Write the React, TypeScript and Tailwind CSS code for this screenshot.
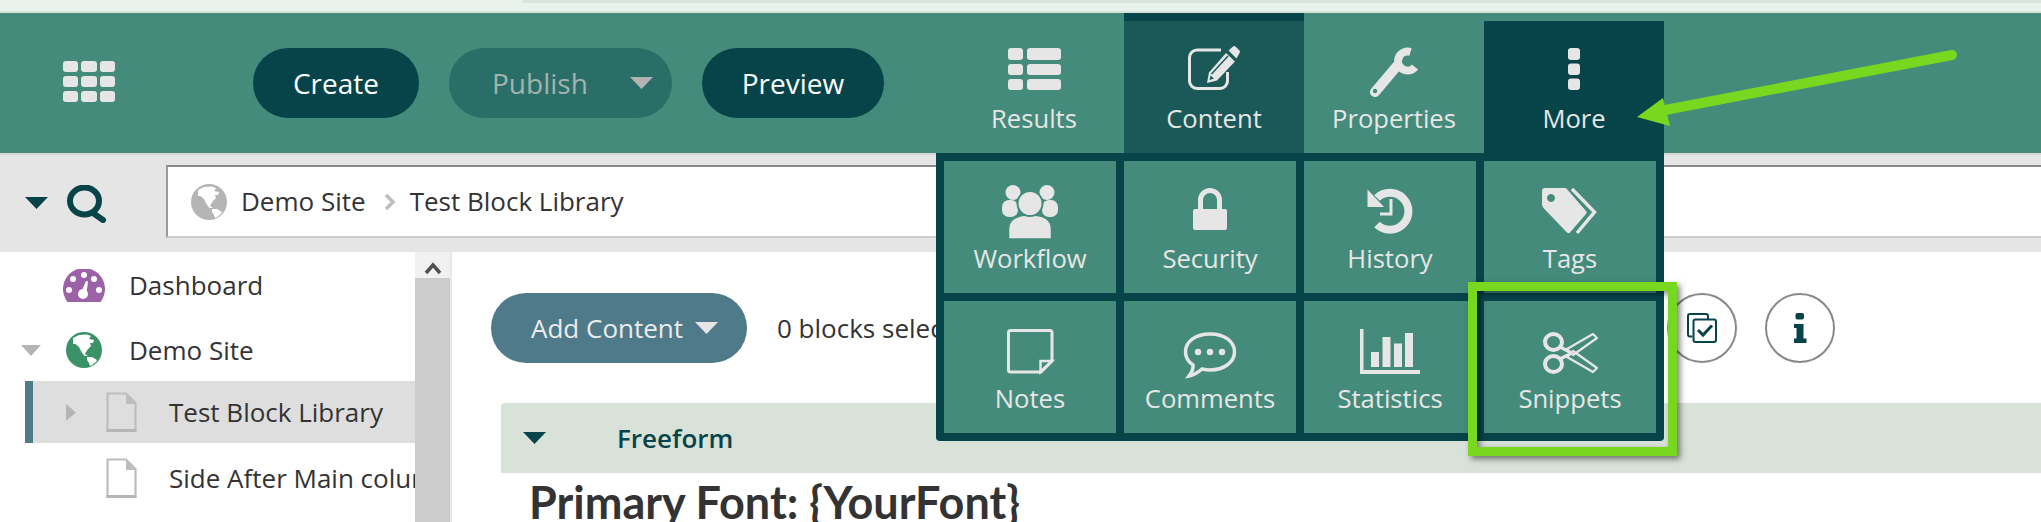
import React from "react";

const C = "#e6e6e6";
const TEAL = "#448b7b";
const DARK = "#07444a";

const Box = ({ children }: { children: React.ReactNode }) => (
  <svg width="60" height="56" viewBox="0 0 60 56" className="shrink-0 block">{children}</svg>
);

const IconResults = () => (
  <Box>
    {[5, 21, 36].map((y, i) => (
      <g key={y} fill={C}>
        <rect x="4" y={y} width="15" height={i === 0 ? 12 : 11} rx="3" />
        <rect x="23" y={y} width="34" height={i === 0 ? 12 : 11} rx="3" />
      </g>
    ))}
  </Box>
);

const IconContent = () => (
  <Box>
    <path d="M37 7 H13 a7.5 7.5 0 0 0 -7.5 7.5 V38 a7.5 7.5 0 0 0 7.5 7.5 H36 a7.5 7.5 0 0 0 7.5 -7.5 V29" fill="none" stroke={C} strokeWidth="3" />
    <path d="M23 40 L25 29.5 L42 10 L51 18.5 L33 37.5 Z" fill={C} />
    <path d="M44.5 7.5 L49 3.5 a2 2 0 0 1 2.5 0 L55.5 7.5 a2 2 0 0 1 0 2.5 L52.5 15.5 Z" fill={C} />
    <path d="M27.5 31 L44 13" stroke="#1b5858" strokeWidth="1.4" fill="none" />
    <path d="M25.5 37 L26.5 32.5 L30 35.5 Z" fill="#1b5858" />
  </Box>
);

const IconWrench = () => (
  <Box>
    <path d="M46.5 9 A9.5 9.5 0 1 0 51 24" fill="none" stroke={C} strokeWidth="8" />
    <path d="M11 49 L33 23" stroke={C} strokeWidth="10" strokeLinecap="round" />
    <circle cx="11" cy="48" r="2.2" fill={TEAL} />
  </Box>
);

const IconDots = () => (
  <Box>
    <rect x="24" y="5" width="12" height="12" rx="3" fill={C} />
    <rect x="24" y="20.5" width="12" height="11.5" rx="3" fill={C} />
    <rect x="24" y="35.5" width="12" height="11.5" rx="3" fill={C} />
  </Box>
);

const IconWorkflow = () => (
  <Box>
    <circle cx="13" cy="7.5" r="7.5" fill={C} />
    <circle cx="47" cy="7.5" r="7.5" fill={C} />
    <rect x="2" y="15" width="16" height="17" rx="7" fill={C} />
    <rect x="42" y="15" width="16" height="17" rx="7" fill={C} />
    <path d="M8.5 54 V44 C8.5 34 16 30 30 30 C44 30 51.5 34 51.5 44 V54 Z" fill={C} stroke={TEAL} strokeWidth="1.5" />
    <circle cx="30" cy="18.5" r="12.5" fill={C} stroke={TEAL} strokeWidth="2" />
  </Box>
);

const IconLock = () => (
  <Box>
    <path d="M20.5 26 V15 a9.5 9.5 0 0 1 19 0 V26" fill="none" stroke={C} strokeWidth="5" />
    <rect x="13" y="24" width="34" height="21" rx="2" fill={C} />
  </Box>
);

const IconHistory = () => (
  <Box>
    <path d="M17 13 A18.5 18.5 0 1 1 17 39.5" fill="none" stroke={C} strokeWidth="8" />
    <path d="M7.5 4.5 V22 H24 Z" fill={C} />
    <path d="M31 14 V29 H20" fill="none" stroke={C} strokeWidth="3" />
  </Box>
);

const IconTags = () => (
  <Box>
    <path fillRule="evenodd" d="M5 3 H26 L46 26 Q47.5 27.5 46 29 L30 47.5 Q28 49 26.5 47 L3.5 23 Q2 21.5 2 19 V6 Q2 3 5 3 Z M11 9 a4 4 0 1 0 0.01 0 Z" fill={C} />
    <path d="M32 4 L54.5 27 L37 48" fill="none" stroke={C} strokeWidth="3.5" />
  </Box>
);

const IconNotes = () => (
  <Box>
    <path d="M10.5 5.5 H50 Q52 5.5 52 7.5 V36 L41 47 H10.5 Q8.5 47 8.5 45 V7.5 Q8.5 5.5 10.5 5.5 Z" fill="none" stroke={C} strokeWidth="3" />
    <path d="M52 36 H40.5 V47 Z" fill="none" stroke={C} strokeWidth="2.5" />
  </Box>
);

const IconComments = () => (
  <Box>
    <path d="M13 40 C7 36 5.5 31 5.5 27 C5.5 16 16 9 30 9 C44 9 54.5 16 54.5 27 C54.5 37 44 45 30 45 C27 45 24.5 44.5 22 44 C18 47.5 14 50 9 51 C12 47 13.5 44 13 40 Z" fill="none" stroke={C} strokeWidth="3.5" />
    <circle cx="18" cy="27" r="3.2" fill={C} />
    <circle cx="30" cy="27" r="3.2" fill={C} />
    <circle cx="42" cy="27" r="3.2" fill={C} />
  </Box>
);

const IconStats = () => (
  <Box>
    <rect x="0" y="4" width="3.5" height="45" fill={C} />
    <rect x="0" y="45" width="60" height="4" fill={C} />
    <rect x="11" y="27" width="8" height="15" fill={C} />
    <rect x="22.5" y="12" width="8" height="30" fill={C} />
    <rect x="34" y="18.5" width="8" height="23.5" fill={C} />
    <rect x="45" y="8" width="8" height="34" fill={C} />
  </Box>
);

const IconScissors = () => (
  <Box>
    <ellipse cx="13.5" cy="17" rx="8.5" ry="8" fill="none" stroke={C} strokeWidth="4" />
    <ellipse cx="13.5" cy="39" rx="8.5" ry="8" fill="none" stroke={C} strokeWidth="4" />
    <path d="M20 22 L30 27 M20 34 L30 29" stroke={C} strokeWidth="3.5" />
    <path d="M27 24 L53 9 L57 13 L33 30 Z" fill="none" stroke={C} strokeWidth="2.2" strokeLinejoin="round" />
    <path d="M27 32 L53 47 L57 43 L33 26 Z" fill="none" stroke={C} strokeWidth="2.2" strokeLinejoin="round" />
    <circle cx="30" cy="28" r="1.6" fill={C} />
  </Box>
);

const Continents = ({ fill }: { fill: string }) => (
  <g fill={fill}>
    <path d="M7 6 L13 3 L21 2.5 L25 4 L23 7 L28 8 L27 11 L24 11 L25 14 L22 17 L20 20 L19 22 L22 24 L18.5 24 L15.5 20 L13 15 L9.5 12 L7 12 Z" />
    <path d="M21 25 L26 25 L31 28 L30 30 L26 33 L24 34 L23 31 L21 28 Z" />
  </g>
);

const Globe = ({ bg, className }: { bg: string; className?: string }) => (
  <svg width="36" height="36" viewBox="0 0 36 36" className={className}>
    <circle cx="18" cy="18" r="18" fill={bg} />
    <Continents fill="#ffffff" />
  </svg>
);

const Gauge = () => (
  <svg width="42" height="33" viewBox="0 0 42 33" className="shrink-0">
    <path d="M4.5 33 A21 21 0 1 1 37.5 33 Z" fill="#9b62a8" />
    {[[6, 21], [10, 10], [21, 6], [31, 10], [36, 21]].map(([x, y]) => (
      <circle key={x} cx={x} cy={y} r="3" fill="#fff" />
    ))}
    <path d="M23 12 L25 12.5 L23.5 24 L18 24 Z" fill="#fff" />
    <circle cx="20" cy="25" r="5" fill="#fff" />
  </svg>
);

const Doc = () => (
  <svg width="31" height="40" viewBox="0 0 31 40" className="shrink-0">
    <path d="M1.5 1.5 H20 L29.5 11 V38.5 H1.5 Z" fill="#fff" fillOpacity="0" stroke="#bdbdbd" strokeWidth="2.2" />
    <path d="M20 1 V12 H30 Z" fill="#bdbdbd" />
    <rect x="0.5" y="37" width="30" height="3" fill="#b5b5b5" />
  </svg>
);

const Caret = ({ w, h, color, dir = "down", className }: { w: number; h: number; color: string; dir?: "down" | "right"; className?: string }) => (
  <svg width={w} height={h} viewBox={`0 0 ${w} ${h}`} className={className}>
    <polygon points={dir === "down" ? `0,0 ${w},0 ${w / 2},${h}` : `0,0 ${w},${h / 2} 0,${h}`} fill={color} />
  </svg>
);

const Tab = ({ label, icon, variant }: { label: string; icon: React.ReactNode; variant?: "active" | "more" }) => {
  const cls =
    variant === "active"
      ? "bg-[#1b5858] border-t-8 border-[#07444a] pt-[22px]"
      : variant === "more"
      ? "bg-[#07444a] mt-[8px] pt-[22px]"
      : "pt-[30px]";
  return (
    <div className={`w-[180px] flex flex-col items-center ${cls}`}>
      {icon}
      <span className="mt-[3px] text-[25.6px] leading-[34px] text-[#e6e6e6]">{label}</span>
    </div>
  );
};

const Tile = ({ label, icon }: { label: string; icon: React.ReactNode }) => (
  <div className="h-[132px] bg-[#448b7b] flex flex-col items-center pt-[24px]">
    {icon}
    <span className="mt-[1px] text-[25.6px] leading-[34px] text-[#e6e6e6]">{label}</span>
  </div>
);

export default function App() {
  return (
    <div className="relative w-[2041px] h-[522px] overflow-hidden bg-white font-['Open_Sans',sans-serif] text-[#333333]">
      {/* browser strip */}
      <div className="h-[13px] bg-[#e9f2ec] border-b-2 border-[#d5e4da] flex justify-end">
        <div className="w-[1519px] h-[3px] bg-[#d9e6df] rounded-bl-[3px]" />
      </div>

      {/* toolbar */}
      <div className="h-[140px] bg-[#448b7b] flex">
        <div className="ml-[63px] mt-[48px] w-[52px] h-[41px] grid grid-cols-3 gap-x-[3px] gap-y-[4px]">
          {Array.from({ length: 9 }).map((_, i) => (
            <div key={i} className="bg-[#e6e6e6] rounded-[3px]" />
          ))}
        </div>
        <div className="ml-[138px] mt-[35px] h-[70px] flex gap-[30px]">
          <div className="w-[166px] rounded-full bg-[#07444a] text-white text-[28px] flex items-center justify-center">Create</div>
          <div className="w-[223px] rounded-full bg-[#2a6f67] text-[#a3b3ae] text-[28px] flex items-center justify-between pl-[43px] pr-[19px]">
            <span>Publish</span>
            <Caret w={23} h={12} color="#b3b3b3" />
          </div>
          <div className="w-[182px] rounded-full bg-[#07444a] text-white text-[28px] flex items-center justify-center">Preview</div>
        </div>
        <div className="ml-[60px] flex">
          <Tab label="Results" icon={<IconResults />} />
          <Tab label="Content" icon={<IconContent />} variant="active" />
          <Tab label="Properties" icon={<IconWrench />} />
          <Tab label="More" icon={<IconDots />} variant="more" />
        </div>
      </div>

      {/* search row */}
      <div className="h-[99px] bg-[#e5e5e5] border-t-2 border-[#d6d6d6] flex">
        <div className="ml-[25px] mt-[42px]">
          <Caret w={23} h={12} color={DARK} />
        </div>
        <svg width="40" height="38" viewBox="0 0 40 38" className="ml-[19px] mt-[30px]">
          <ellipse cx="17.5" cy="16" rx="14.5" ry="13.5" fill="none" stroke={DARK} strokeWidth="6" />
          <path d="M26 28 L36 35" stroke={DARK} strokeWidth="6" strokeLinecap="round" />
        </svg>
        <div className="ml-[59px] mt-[10px] h-[73px] flex-1 bg-white border-t-2 border-l-2 border-b-2 border-t-[#8a8a8a] border-l-[#9a9a9a] border-b-[#cccccc] flex items-center pl-[23px] text-[26px]">
          <Globe bg="#b5b5b5" />
          <span className="ml-[14px]">Demo Site</span>
          <svg width="12" height="16" viewBox="0 0 12 16" className="ml-[18px]">
            <path d="M2 1 L9 8 L2 15" fill="none" stroke="#bdbdbd" strokeWidth="3.5" />
          </svg>
          <span className="ml-[14px]">Test Block Library</span>
        </div>
      </div>

      {/* body */}
      <div className="flex h-[270px]">
        <div className="w-[415px] text-[26px] shrink-0 overflow-hidden">
          <div className="h-[66px] flex items-center pl-[63px]">
            <Gauge />
            <span className="ml-[24px] whitespace-nowrap">Dashboard</span>
          </div>
          <div className="h-[63px] pt-[1px] flex items-center pl-[21px]">
            <Caret w={20} h={11} color="#b5b5b5" />
            <Globe bg="#3a9266" className="ml-[25px]" />
            <span className="ml-[27px] whitespace-nowrap">Demo Site</span>
          </div>
          <div className="ml-[25px] h-[62px] mb-[4px] bg-[#dedede] border-l-8 border-[#4f7a8a] flex items-center pl-[33px]">
            <Caret w={10} h={17} color="#b5b5b5" dir="right" />
            <div className="ml-[30px]"><Doc /></div>
            <span className="ml-[32px] whitespace-nowrap">Test Block Library</span>
          </div>
          <div className="h-[62px] flex items-center pl-[106px]">
            <Doc />
            <span className="ml-[32px] whitespace-nowrap">Side After Main column</span>
          </div>
        </div>

        <div className="w-[35px] shrink-0 bg-[#cccccc]">
          <div className="h-[26px] bg-[#f1f1f1] flex justify-center pt-[10px]">
            <svg width="18" height="13" viewBox="0 0 18 13">
              <path d="M2 11 L9 3 L16 11" fill="none" stroke="#505050" strokeWidth="3.5" />
            </svg>
          </div>
        </div>
        <div className="w-[2px] shrink-0 bg-[#e8e8e8]" />

        <div className="flex-1 min-w-0">
          <div className="ml-[39px] mt-[41px] h-[70px] flex items-center">
            <div className="w-[256px] h-[70px] rounded-full bg-[#4f7a8a] text-[#ececec] text-[26px] flex items-center pl-[40px]">
              <span>Add Content</span>
              <Caret w={23} h={12} color="#e6e6e6" className="ml-[12px]" />
            </div>
            <span className="ml-[30px] text-[26px] whitespace-nowrap">0 blocks selected</span>
            <div className="ml-auto mr-[206px] flex gap-[28px]">
              <div className="w-[70px] h-[70px] rounded-full border-2 border-[#888888] flex items-center justify-center">
                <svg width="30" height="30" viewBox="0 0 30 30">
                  <path d="M5.5 23.5 H3 a2 2 0 0 1 -2 -2 V3 a2 2 0 0 1 2 -2 H19 a2 2 0 0 1 2 2 V6" fill="none" stroke={DARK} strokeWidth="2" />
                  <rect x="6.5" y="6.5" width="22.5" height="22.5" rx="2" fill="#fff" stroke={DARK} strokeWidth="2" />
                  <path d="M11 17 L16 22 L25 12.5" fill="none" stroke={DARK} strokeWidth="3" />
                </svg>
              </div>
              <div className="w-[70px] h-[70px] rounded-full border-2 border-[#888888] flex items-center justify-center">
                <svg width="14" height="30" viewBox="0 0 14 30">
                  <rect x="2.5" y="0" width="8.5" height="6.5" rx="2" fill={DARK} />
                  <path d="M1 11 H10.5 V25.5 H13.5 V30 H1 V25.5 H3.5 V15 H1 Z" fill={DARK} />
                </svg>
              </div>
            </div>
          </div>
          <div className="ml-[49px] mt-[40px]">
            <div className="h-[70px] bg-[#d9e2d8] rounded-tl-[4px] flex items-center pl-[22px]">
              <Caret w={23} h={12} color={DARK} />
              <span className="ml-[71px] pt-[1px] text-[26px] font-semibold text-[#07444a]">Freeform</span>
            </div>
            <h1 className="pl-[28px] pt-[2px] font-['Lato',sans-serif] font-bold text-[45px] leading-[54px] text-[#333333] whitespace-nowrap">
              Primary Font: {"{YourFont}"}
            </h1>
          </div>
        </div>
      </div>

      {/* dropdown menu */}
      <div className="absolute left-[936px] top-[153px] w-[728px] h-[288px] bg-[#07444a] rounded-b-[4px] p-2 grid grid-cols-4 gap-2">
        <Tile label="Workflow" icon={<IconWorkflow />} />
        <Tile label="Security" icon={<IconLock />} />
        <Tile label="History" icon={<IconHistory />} />
        <Tile label="Tags" icon={<IconTags />} />
        <Tile label="Notes" icon={<IconNotes />} />
        <Tile label="Comments" icon={<IconComments />} />
        <Tile label="Statistics" icon={<IconStats />} />
        <Tile label="Snippets" icon={<IconScissors />} />
      </div>

      {/* annotations */}
      <div className="absolute left-[1468px] top-[282px] w-[209px] h-[174px] border-[9px] border-[#78d71f] shadow-[3px_3px_6px_rgba(0,0,0,0.5),inset_3px_3px_6px_rgba(0,0,0,0.45)]" />
      <svg width="340" height="90" viewBox="0 0 340 90" className="absolute left-[1630px] top-[45px]">
        <path d="M30 66 L322 10" stroke="#78d71f" strokeWidth="10" strokeLinecap="round" />
        <polygon points="7,72 33,53 40,81" fill="#78d71f" />
      </svg>
    </div>
  );
}
